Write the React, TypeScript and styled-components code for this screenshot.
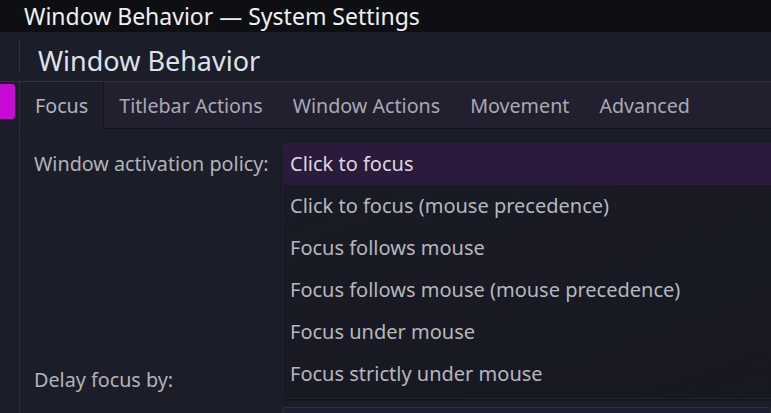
import React from "react";
import styled, { createGlobalStyle } from "styled-components";

const Global = createGlobalStyle`
  html, body { margin: 0; padding: 0; background: #1b1d29; overflow: hidden; }
  body { font-family: "Noto Sans", "Open Sans", sans-serif; }
  * { box-sizing: border-box; }
`;

const Window = styled.div`
  width: 771px;
  height: 413px;
  display: flex;
  flex-direction: column;
  background: #1b1d29;
  position: relative;
  overflow: hidden;
`;

const TitleBar = styled.div`
  height: 32px;
  flex: none;
  background: #0e0f13;
  color: #f0f0f2;
  font-size: 23px;
  line-height: 32px;
  padding-left: 24px;
  white-space: nowrap;
`;

const Header = styled.div`
  height: 50px;
  flex: none;
  display: flex;
  align-items: center;
  border-bottom: 1px solid #2f3240;
  background: #1b1d29;
`;

const HeaderGutter = styled.div`
  width: 20px;
  height: 33px;
  border-right: 1px solid #30333f;
  flex: none;
`;

const PageTitle = styled.h1`
  margin: 0 0 0 18px;
  font-size: 27px;
  font-weight: 400;
  color: #dde1ea;
  white-space: nowrap;
  line-height: 1;
  padding-top: 7px;
`;

const Body = styled.div`
  flex: 1;
  display: flex;
  min-height: 0;
`;

const Sidebar = styled.div`
  width: 20px;
  flex: none;
  border-right: 1px solid #2c2f3b;
  padding-top: 2px;
`;

const SidebarItem = styled.div<{ $active?: boolean }>`
  width: 15px;
  height: 35px;
  border-radius: 0 3px 3px 0;
  background: ${(p) => (p.$active ? "#c80ad5" : "transparent")};
`;

const Page = styled.div`
  flex: 1;
  display: flex;
  flex-direction: column;
  min-width: 0;
`;

const TabBar = styled.div`
  height: 47px;
  flex: none;
  display: flex;
  background: #221f2e;
  border-bottom: 1px solid #14151c;
`;

const Tab = styled.div<{ $active?: boolean }>`
  padding: 0 15px;
  display: flex;
  align-items: center;
  font-size: 19.7px;
  color: ${(p) => (p.$active ? "#b3b4bb" : "#a9a9b1")};
  white-space: nowrap;
  background: ${(p) => (p.$active ? "#1c1e2a" : "transparent")};
  border-right: ${(p) => (p.$active ? "1px solid #14151c" : "none")};
  margin-bottom: ${(p) => (p.$active ? "-1px" : "0")};
  padding-bottom: ${(p) => (p.$active ? "1px" : "0")};
`;

const Content = styled.div`
  flex: 1;
  position: relative;
  padding: 13px 0 0 14px;
`;

const FormRow = styled.div<{ $height: number; $gap?: number }>`
  display: grid;
  grid-template-columns: 248px 1fr;
  align-items: center;
  height: ${(p) => p.$height}px;
  margin-top: ${(p) => p.$gap ?? 0}px;
`;

const Label = styled.div`
  font-size: 19.75px;
  color: #b2b3ba;
  white-space: nowrap;
`;

const Field = styled.div`
  height: 100%;
  border: 1px solid #2b2e3a;
  border-radius: 3px;
  background: #1d2030;
`;

const Popup = styled.div`
  position: absolute;
  left: 262px;
  top: 13px;
  width: 520px;
  padding-bottom: 3px;
  background: linear-gradient(160deg, #191b25 0%, #171822 100%);
  border: 1px solid #20222c;
  border-right: none;
  border-radius: 3px 0 0 3px;
  box-shadow: 0 1px 3px rgba(0, 0, 0, 0.35);
`;

const Option = styled.div<{ $selected?: boolean }>`
  height: 42px;
  display: flex;
  align-items: center;
  padding-left: 7px;
  padding-bottom: 1px;
  font-size: 20px;
  white-space: nowrap;
  color: ${(p) => (p.$selected ? "#d9d9de" : "#b6b7be")};
  background: ${(p) => (p.$selected ? "#2b1a3c" : "transparent")};
  border-radius: ${(p) => (p.$selected ? "3px 0 0 0" : "0")};
`;

const tabs = ["Focus", "Titlebar Actions", "Window Actions", "Movement", "Advanced"];
const options = [
  "Click to focus",
  "Click to focus (mouse precedence)",
  "Focus follows mouse",
  "Focus follows mouse (mouse precedence)",
  "Focus under mouse",
  "Focus strictly under mouse",
];

export default function App() {
  return (
    <>
      <Global />
      <Window>
        <TitleBar>Window Behavior — System Settings</TitleBar>
        <Header>
          <HeaderGutter />
          <PageTitle>Window Behavior</PageTitle>
        </Header>
        <Body>
          <Sidebar>
            <SidebarItem $active />
          </Sidebar>
          <Page>
            <TabBar>
              {tabs.map((t, i) => (
                <Tab key={t} $active={i === 0}>
                  {t}
                </Tab>
              ))}
            </TabBar>
            <Content>
              <FormRow $height={42}>
                <Label>Window activation policy:</Label>
                <Field />
              </FormRow>
              <FormRow $height={38} $gap={176}>
                <Label>Delay focus by:</Label>
                <Field />
              </FormRow>
              <FormRow $height={38} $gap={9}>
                <Label />
                <Field />
              </FormRow>
              <Popup>
                {options.map((o, i) => (
                  <Option key={o} $selected={i === 0}>
                    {o}
                  </Option>
                ))}
              </Popup>
            </Content>
          </Page>
        </Body>
      </Window>
    </>
  );
}
